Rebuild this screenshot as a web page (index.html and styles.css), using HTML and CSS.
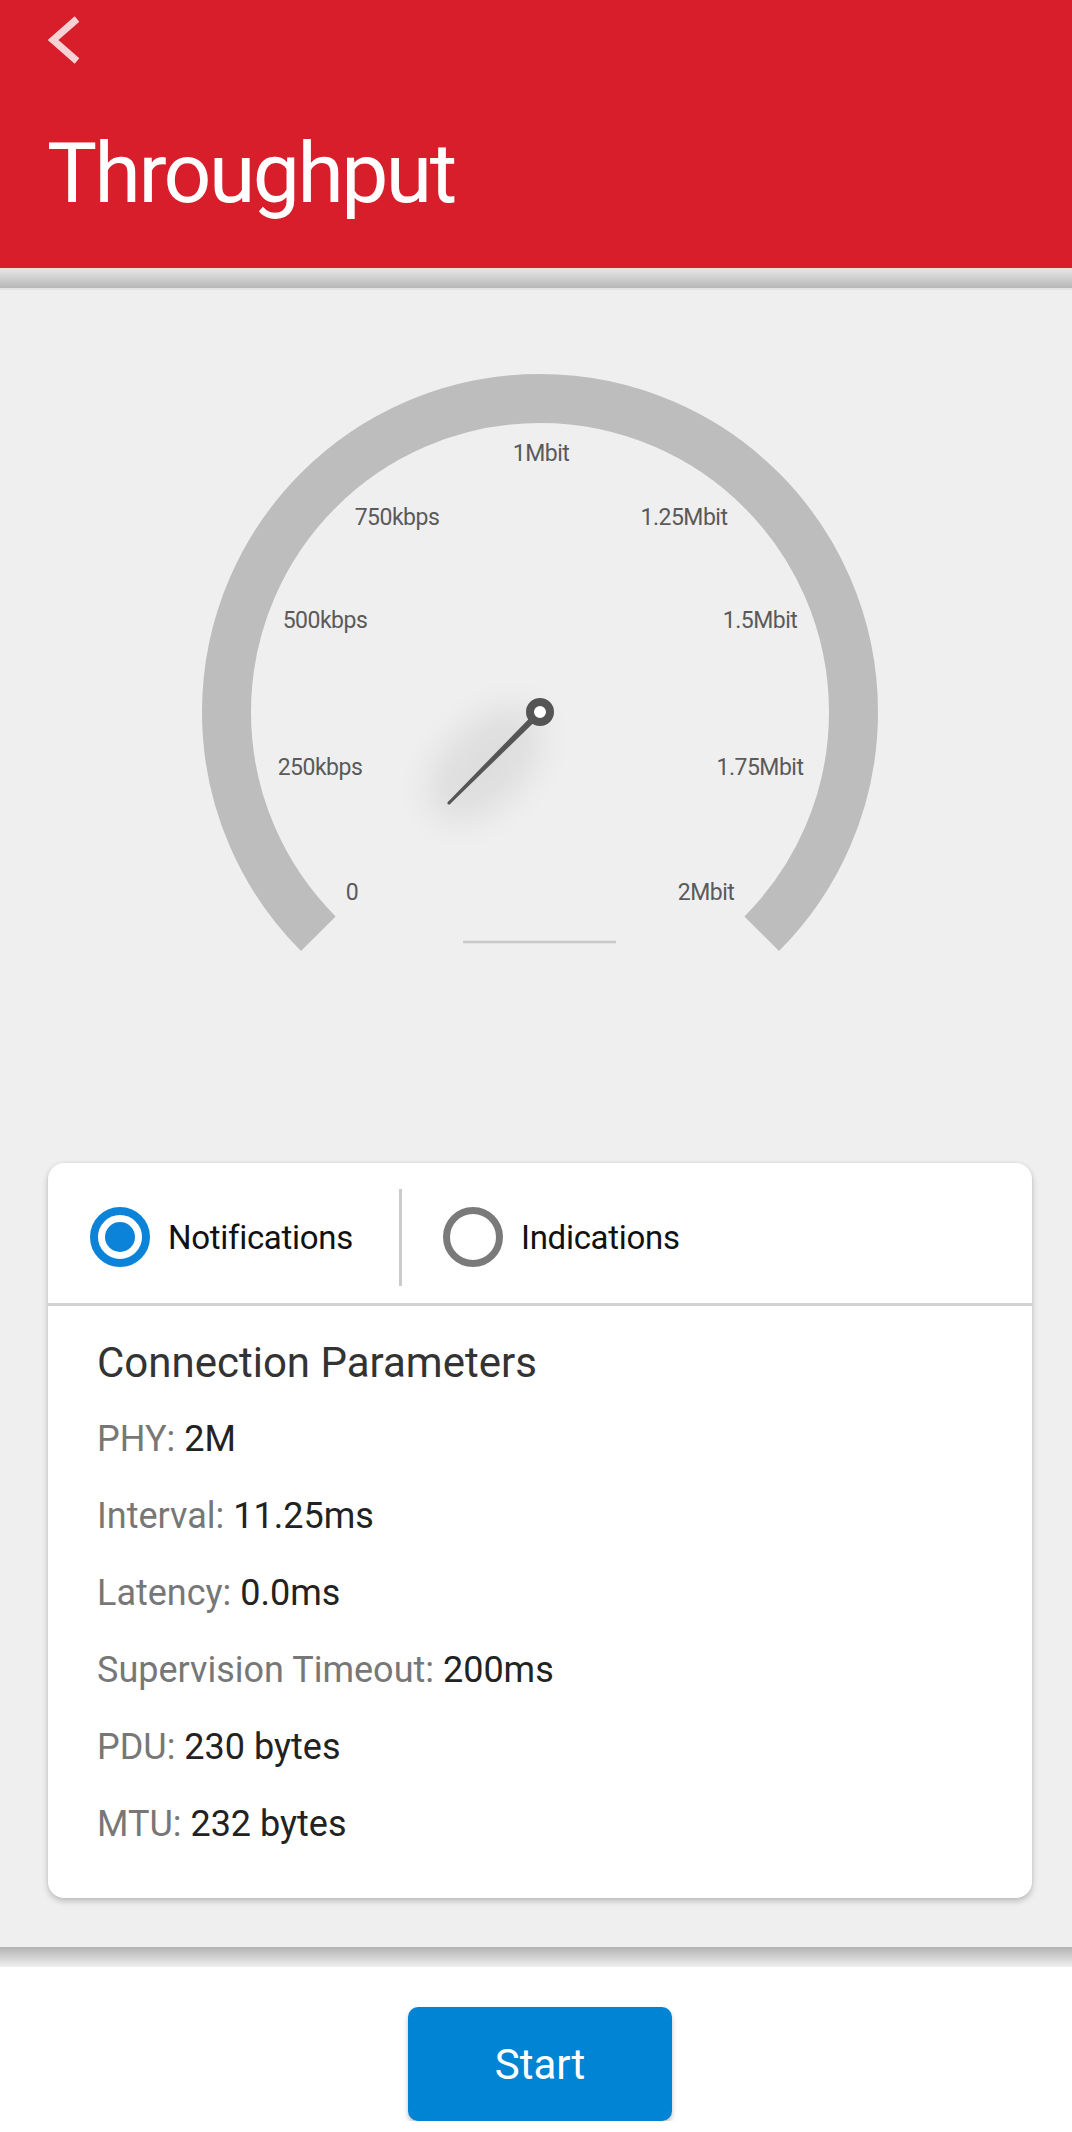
FILE: index.html
```html
<!DOCTYPE html>
<html lang="en">
<head>
<meta charset="utf-8">
<title>Throughput</title>
<link rel="stylesheet" href="styles.css">
</head>
<body>
<header class="appbar">
  <svg class="back" width="50" height="60" viewBox="0 0 50 60" aria-label="Back">
    <path d="M37 9 L13 30 L37 51" fill="none" stroke="rgba(255,255,255,0.8)" stroke-width="7"/>
  </svg>
  <h1 class="title">Throughput</h1>
</header>
<div class="shade-top"></div>
<main class="panel">
  <svg class="gauge" width="1072" height="670" viewBox="0 0 1072 670">
    <defs>
      <filter id="soft" x="-100%" y="-100%" width="300%" height="300%">
        <feGaussianBlur stdDeviation="18"/>
      </filter>
    </defs>
    <path d="M318.3 643.7 A313.5 313.5 0 1 1 761.7 643.7" fill="none" stroke="#bdbdbd" stroke-width="49"/>
    <line x1="463" y1="652" x2="616" y2="652" stroke="#c9c9c9" stroke-width="2.5"/>
    <text x="352" y="610">0</text>
    <text x="320" y="485">250kbps</text>
    <text x="325" y="338">500kbps</text>
    <text x="397" y="235">750kbps</text>
    <text x="541" y="171">1Mbit</text>
    <text x="684" y="235">1.25Mbit</text>
    <text x="760" y="338">1.5Mbit</text>
    <text x="760" y="485">1.75Mbit</text>
    <text x="706" y="610">2Mbit</text>
    <ellipse cx="485" cy="474" rx="70" ry="40" transform="rotate(-45 485 474)" fill="#000" opacity="0.07" filter="url(#soft)"/>
    <polygon points="542.3,424.3 537.7,419.7 447.9,511.9 450.1,514.1" fill="#555"/>
    <circle cx="449" cy="513" r="1.6" fill="#555"/>
    <circle cx="540" cy="422" r="10" fill="#fff" stroke="#555" stroke-width="8"/>
  </svg>

  <section class="card">
    <div class="modes">
      <label class="mode mode-first">
        <span class="radio radio-on"></span>
        <span class="mode-text">Notifications</span>
      </label>
      <span class="vsep"></span>
      <label class="mode mode-second">
        <span class="radio radio-off"></span>
        <span class="mode-text">Indications</span>
      </label>
    </div>
    <div class="params">
      <h2 class="params-title">Connection Parameters</h2>
      <p class="row"><span class="key">PHY:</span> <span class="val">2M</span></p>
      <p class="row"><span class="key">Interval:</span> <span class="val">11.25ms</span></p>
      <p class="row"><span class="key">Latency:</span> <span class="val">0.0ms</span></p>
      <p class="row"><span class="key">Supervision Timeout:</span> <span class="val">200ms</span></p>
      <p class="row"><span class="key">PDU:</span> <span class="val">230 bytes</span></p>
      <p class="row"><span class="key">MTU:</span> <span class="val">232 bytes</span></p>
    </div>
  </section>
</main>
<div class="shade-bottom"></div>
<footer class="actions">
  <button class="start" type="button">Start</button>
</footer>
</body>
</html>
```

FILE: styles.css
```css
* { box-sizing: border-box; }

html, body {
  margin: 0;
  padding: 0;
  background: #ffffff;
  font-family: Roboto, "Noto Sans", sans-serif;
}

.appbar {
  height: 268px;
  background: #d81e2b;
  display: flex;
  flex-direction: column;
  padding: 10px 0 0 40px;
}

.back {
  display: block;
}

.title {
  margin: 62px 0 0 7px;
  font-size: 84px;
  line-height: 84px;
  font-weight: 400;
  letter-spacing: -2.5px;
  color: #ffffff;
}

.shade-top {
  height: 22px;
  background: linear-gradient(#e4e4e4, #b7b7b7);
  border-top: 2px solid #f2dcdc;
  border-bottom: 2px solid #e4e4e4;
}

.panel {
  background: #f0eff0;
  height: 1657px;
  display: flex;
  flex-direction: column;
}

.gauge {
  display: block;
  flex: none;
}

.gauge text {
  font-family: Roboto, "Noto Sans", sans-serif;
  font-size: 23px;
  fill: #5a5a5a;
  text-anchor: middle;
  letter-spacing: -0.5px;
}

.card {
  margin: 203px 40px 0 48px;
  height: 735px;
  background: #ffffff;
  border-radius: 16px;
  box-shadow: 0 3px 6px rgba(0, 0, 0, 0.22), 0 0 3px rgba(0, 0, 0, 0.06);
  display: flex;
  flex-direction: column;
}

.modes {
  height: 143px;
  padding: 8px 0 0 42px;
  display: flex;
  align-items: center;
  border-bottom: 3px solid #d2d2d2;
}

.mode {
  display: flex;
  align-items: center;
  gap: 18px;
}

.mode-first {
  width: 309px;
}

.mode-second {
  margin-left: 41px;
}

.radio {
  width: 60px;
  height: 60px;
  border-radius: 50%;
  flex: none;
  display: flex;
  align-items: center;
  justify-content: center;
}

.radio-on {
  border: 8px solid #0b83d9;
}

.radio-on::after {
  content: "";
  width: 30px;
  height: 30px;
  border-radius: 50%;
  background: #0b83d9;
}

.radio-off {
  border: 7px solid #7a7a7a;
}

.mode-text {
  font-size: 33px;
  color: #111111;
  letter-spacing: -0.3px;
}

.vsep {
  width: 3px;
  height: 97px;
  background: #cbcbcb;
  flex: none;
}

.params {
  padding: 18px 0 0 49px;
}

.params-title {
  margin: 0;
  font-size: 42px;
  line-height: 77px;
  font-weight: 400;
  color: #333333;
}

.row {
  margin: 0;
  font-size: 36px;
  line-height: 77px;
}

.key {
  color: #777777;
}

.val {
  color: #222222;
}

.shade-bottom {
  height: 20px;
  background: linear-gradient(#b2b2b2, #f0f0f0);
}

.actions {
  padding: 40px 0 0 8px;
  display: flex;
  justify-content: center;
}

.start {
  width: 264px;
  height: 114px;
  border: none;
  border-radius: 10px;
  background: #0284d5;
  color: #ffffff;
  font-family: Roboto, "Noto Sans", sans-serif;
  font-size: 42px;
  box-shadow: 0 3px 5px rgba(0, 0, 0, 0.25);
  padding: 0;
}
```
